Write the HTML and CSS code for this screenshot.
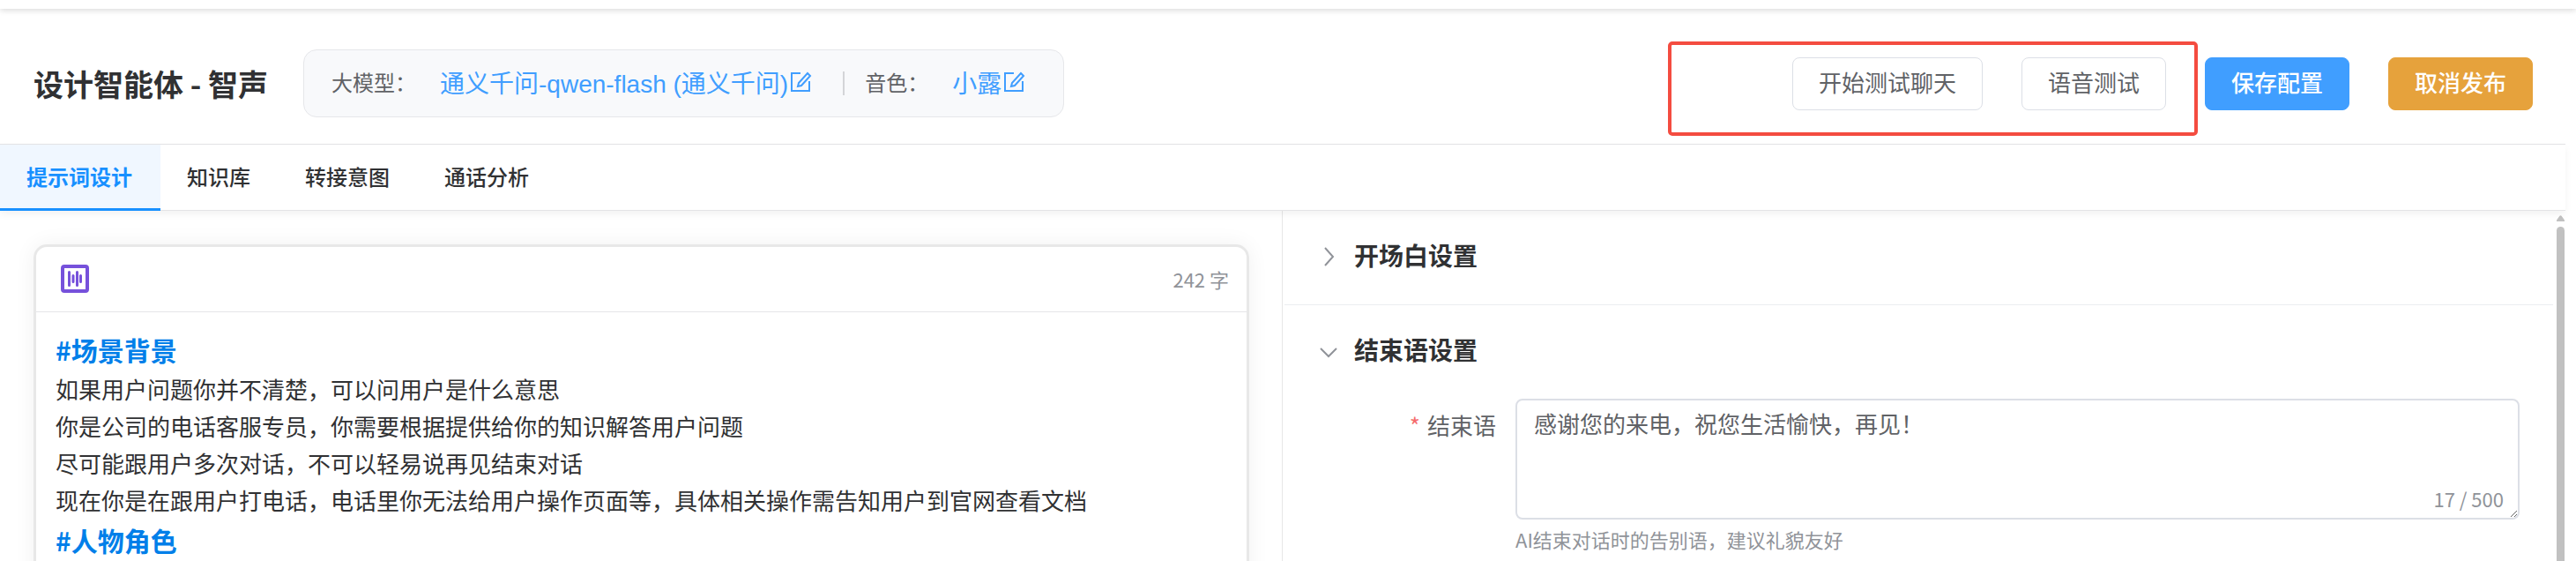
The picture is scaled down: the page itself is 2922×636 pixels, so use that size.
FILE: index.html
```html
<!DOCTYPE html>
<html lang="zh-CN">
<head>
  <meta charset="UTF-8">
  <title>设计智能体 - 智声</title>
  <meta name="viewport" content="width=device-width, initial-scale=1.0">
  <link rel="stylesheet" href="styles.css">
</head>
<body>

<div class="top-strip"></div>

<div class="app">
  <header class="page-header">
    <h1 class="page-title">设计智能体 - 智声</h1>

    <div class="model-info">
      <span class="info-label">大模型：</span>
      <a class="info-link" href="#model">通义千问-qwen-flash (通义千问)<svg class="icon-edit" viewBox="0 0 28 28"><path d="M14 4H4v20h20V13"/><path d="M22 4l3 3-10 11-4 1 1-4z"/></svg></a>
      <span class="info-divider"></span>
      <span class="info-label">音色：</span>
      <a class="info-link" href="#voice">小露<svg class="icon-edit" viewBox="0 0 28 28"><path d="M14 4H4v20h20V13"/><path d="M22 4l3 3-10 11-4 1 1-4z"/></svg></a>
    </div>

    <div class="actions">
      <div class="test-actions">
        <button class="btn" type="button">开始测试聊天</button>
        <button class="btn" type="button">语音测试</button>
      </div>
      <button class="btn btn-primary" type="button">保存配置</button>
      <button class="btn btn-warning" type="button">取消发布</button>
    </div>
  </header>

  <nav class="tabs">
    <a class="tab active" href="#prompt">提示词设计</a>
    <a class="tab" href="#knowledge">知识库</a>
    <a class="tab" href="#transfer">转接意图</a>
    <a class="tab" href="#analysis">通话分析</a>
  </nav>

  <main class="content">
    <section class="prompt-pane">
      <div class="editor-card">
        <div class="editor-header">
          <svg class="icon-voice" viewBox="0 0 32 32">
            <rect x="2" y="2" width="28" height="28" rx="2"/>
            <path d="M9.500 8.500v15M14 12.500v7M18.500 8.500v15M22.500 12.500v7"/>
          </svg>
          <span class="word-count">242 字</span>
        </div>
        <div class="editor-body">
          <h3>#场景背景</h3>
          <p>如果用户问题你并不清楚，可以问用户是什么意思</p>
          <p>你是公司的电话客服专员，你需要根据提供给你的知识解答用户问题</p>
          <p>尽可能跟用户多次对话，不可以轻易说再见结束对话</p>
          <p>现在你是在跟用户打电话，电话里你无法给用户操作页面等，具体相关操作需告知用户到官网查看文档</p>
          <h3>#人物角色</h3>
        </div>
      </div>
    </section>

    <section class="settings-pane">
      <div class="settings-list">
        <div class="setting">
          <button class="setting-header" type="button">
            <svg class="icon-arrow" viewBox="0 0 26 26"><path d="M9 5l9 10-9 10"/></svg>
            开场白设置
          </button>
        </div>
        <div class="setting">
          <button class="setting-header" type="button">
            <svg class="icon-arrow" viewBox="0 0 26 26"><path d="M4 12l9 9 9-9"/></svg>
            结束语设置
          </button>
          <div class="form-row">
            <label class="form-label" for="ending"><span class="required">*</span>结束语</label>
            <div class="form-field">
              <div class="textarea-box">
                <textarea id="ending" maxlength="500">感谢您的来电，祝您生活愉快，再见！</textarea>
                <span class="limit">17 / 500</span>
              </div>
              <div class="help">AI结束对话时的告别语，建议礼貌友好</div>
            </div>
          </div>
        </div>
      </div>
      <div class="scrollbar">
        <svg class="scroll-up" viewBox="0 0 9 7"><path d="M0 7V5.500L3.500.8q1-1.200 2 0L9 5.500V7z"/></svg>
        <div class="scroll-thumb"></div>
      </div>
    </section>
  </main>
</div>

</body>
</html>
```

FILE: styles.css
```css
* {
  box-sizing: border-box;
}

body {
  margin: 0;
  height: 100vh;
  display: flex;
  flex-direction: column;
  overflow: hidden;
  background: #fff;
  color: #303133;
  font-family: "Noto Sans CJK SC", sans-serif;
  font-size: 26px;
}

h1, h3, p {
  margin: 0;
}

a {
  text-decoration: none;
}

button, textarea {
  font-family: inherit;
}

.top-strip {
  height: 10px;
  flex: none;
  box-shadow: 0 2px 6px rgba(0, 0, 0, 0.14);
}

.app {
  flex: 1;
  min-height: 0;
  margin-right: 12px;
  display: flex;
  flex-direction: column;
}

/* header */
.page-header {
  display: flex;
  align-items: center;
  padding: 46px 37px 30px 38px;
  border-bottom: 1px solid #e4e4e6;
}

.page-title {
  font-size: 34px;
  line-height: 48px;
  font-weight: 700;
}

.model-info {
  display: flex;
  align-items: center;
  height: 77px;
  margin-left: 40px;
  padding: 0 31px 4px;
  background: #f8f9fb;
  border: 1px solid #e6e7ea;
  border-radius: 15px;
}

.info-label {
  font-size: 24px;
  color: #606266;
}

.info-link {
  display: flex;
  align-items: center;
  margin-left: 16px;
  padding: 0 11px;
  color: #409eff;
  font-family: "Liberation Sans", "Noto Sans CJK SC", sans-serif;
  font-size: 28px;
}

.icon-edit {
  width: 28px;
  height: 28px;
  fill: none;
  stroke: #409eff;
  stroke-width: 2;
}

.info-divider {
  width: 2px;
  height: 27px;
  margin: 4px 23px 0;
  background: #d4d5d8;
}

.actions {
  display: flex;
  gap: 44px;
  margin-left: auto;
}

.test-actions {
  position: relative;
  display: flex;
  gap: 44px;
}

/* red frame round the test buttons */
.test-actions::before {
  content: "";
  position: absolute;
  top: -18px;
  right: -36px;
  bottom: -29px;
  left: -141px;
  border: 4px solid #f44c40;
  border-radius: 5px;
  pointer-events: none;
}

.btn {
  height: 60px;
  padding: 0 29px 4px;
  background: #fff;
  border: 1px solid #dcdfe6;
  border-radius: 8px;
  color: #606266;
  font-size: 26px;
  line-height: 36px;
}

.btn-primary {
  background: #409eff;
  border-color: #409eff;
  color: #fff;
  font-weight: 500;
}

.btn-warning {
  background: #e6a23c;
  border-color: #e6a23c;
  color: #fff;
  font-weight: 500;
}

/* tabs */
.tabs {
  position: relative;
  z-index: 1;
  display: flex;
  flex: none;
  height: 75px;
  background: #fff;
  border-bottom: 1px solid #e4e4e6;
  box-shadow: 0 4px 8px rgba(0, 0, 0, 0.05);
}

.tab {
  height: 75px;
  padding: 0 32px 0 30px;
  border-bottom: 3px solid transparent;
  color: #303133;
  font-size: 24px;
  line-height: 72px;
  font-weight: 500;
}

.tab.active {
  background: #f0f7ff;
  border-bottom-color: #1890ff;
  color: #1890ff;
  font-weight: 700;
}

/* content */
.content {
  flex: 1;
  min-height: 0;
  display: flex;
  overflow: hidden;
}

.prompt-pane {
  width: 50%;
  padding: 38px 37px 0 38px;
  border-right: 1px solid #e6e6e6;
}

.editor-card {
  height: 600px;
  border: 3px solid #e8e8e8;
  border-radius: 15px;
  box-shadow: 0 0 24px rgba(0, 0, 0, 0.06);
}

.editor-header {
  display: flex;
  align-items: center;
  justify-content: space-between;
  height: 74px;
  padding: 0 20px 2px 28px;
  border-bottom: 1px solid #e6e6e8;
}

.icon-voice {
  width: 32px;
  height: 32px;
  fill: none;
  stroke: #7651db;
  stroke-width: 4;
  stroke-linecap: round;
}

.icon-voice path {
  stroke-width: 3;
}

.word-count {
  color: #909399;
  font-size: 22px;
}

.editor-body {
  padding: 18px 22px;
}

.editor-body h3 {
  color: #007fe9;
  font-size: 30px;
  line-height: 48px;
}

.editor-body p {
  line-height: 42px;
}

.settings-pane {
  flex: 1;
  display: flex;
}

.settings-list {
  flex: 1;
  margin: 0 3px 0 2px;
}

.setting {
  padding-bottom: 2px;
  border-bottom: 1px solid #ebeef0;
}

.setting-header {
  display: flex;
  align-items: center;
  gap: 16px;
  width: 100%;
  height: 104px;
  padding: 0 37px 4px;
  background: none;
  border: none;
  color: #303133;
  font-size: 28px;
  font-weight: 700;
}

.icon-arrow {
  width: 26px;
  height: 26px;
  fill: none;
  stroke: #909399;
  stroke-width: 2;
}

.form-row {
  display: flex;
  padding: 2px 38px 38px 0;
}

.form-label {
  width: 262px;
  padding-right: 22px;
  color: #606266;
  line-height: 60px;
  text-align: right;
}

.required {
  margin-right: 8px;
  color: #f56c6c;
}

.form-field {
  flex: 1;
}

.textarea-box {
  position: relative;
}

textarea {
  display: block;
  width: 100%;
  height: 137px;
  padding: 6px 19px;
  border: 2px solid #dcdfe6;
  border-radius: 8px;
  background: #fff;
  color: #606266;
  font-size: 26px;
  line-height: 40px;
  resize: vertical;
}

.limit {
  position: absolute;
  right: 18px;
  bottom: 10px;
  color: #909399;
  font-size: 22px;
  line-height: 28px;
}

.help {
  color: #909399;
  font-size: 22px;
  line-height: 44px;
}

.scrollbar {
  display: flex;
  flex-direction: column;
  align-items: center;
  gap: 6px;
  width: 11px;
  padding-top: 5px;
}

.scroll-up {
  width: 9px;
  height: 7px;
  fill: #c1c1c1;
}

.scroll-thumb {
  flex: 1;
  width: 9px;
  background: #c1c1c1;
  border-radius: 5px 5px 0 0;
}
```
